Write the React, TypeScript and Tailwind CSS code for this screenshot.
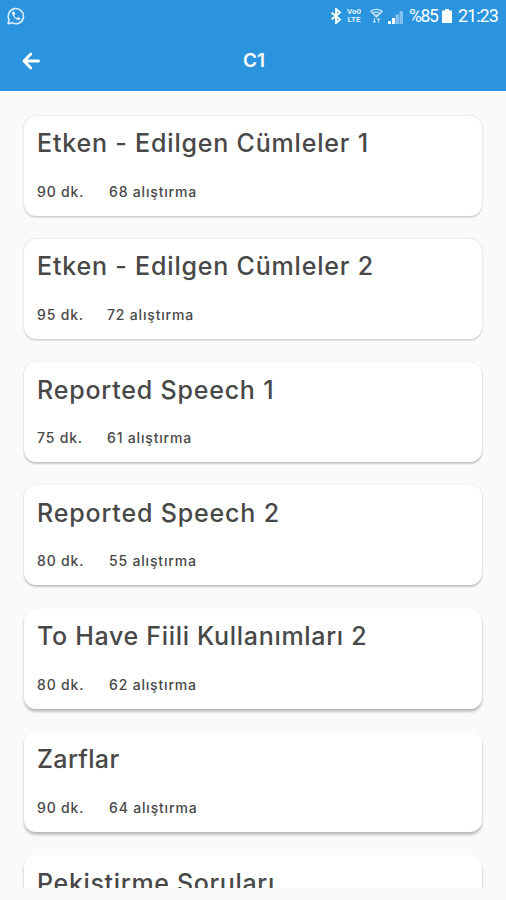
// App.tsx
// Lesson list for a single level (C1).

// ─── Types ────────────────────────────────────────────────────────────────────

interface Lesson {
  title: string;
  minutes: number;
  exercises: number;
  titleClass: string;
  minutesClass: string;
  shadow: string;
}

const SHADOW = {
  soft: "shadow-[0_0_2px_rgba(0,0,0,0.2),0_2px_1px_rgba(0,0,0,0.1)]",
  medium: "shadow-[0_0_2px_rgba(0,0,0,0.12),0_2px_2px_rgba(0,0,0,0.2)]",
  deep: "shadow-[0_1px_2px_rgba(0,0,0,0.08),0_3px_3px_rgba(0,0,0,0.22)]",
};

const LESSONS: Lesson[] = [
  { title: "Etken - Edilgen Cümleler 1", minutes: 90, exercises: 68, titleClass: "tracking-[0.81px]", minutesClass: "w-[72px]", shadow: SHADOW.soft },
  { title: "Etken - Edilgen Cümleler 2", minutes: 95, exercises: 72, titleClass: "tracking-[0.81px]", minutesClass: "w-[70px]", shadow: SHADOW.soft },
  { title: "Reported Speech 1", minutes: 75, exercises: 61, titleClass: "tracking-[0.8px]", minutesClass: "w-[70px]", shadow: SHADOW.medium },
  { title: "Reported Speech 2", minutes: 80, exercises: 55, titleClass: "tracking-[0.83px]", minutesClass: "w-[72px]", shadow: SHADOW.medium },
  { title: "To Have Fiili Kullanımları 2", minutes: 80, exercises: 62, titleClass: "tracking-[0.69px]", minutesClass: "w-[72px]", shadow: SHADOW.deep },
  { title: "Zarflar", minutes: 90, exercises: 64, titleClass: "tracking-[0.35px]", minutesClass: "w-[72px]", shadow: SHADOW.deep },
  { title: "Pekiştirme Soruları", minutes: 85, exercises: 60, titleClass: "tracking-[0.66px]", minutesClass: "w-[72px]", shadow: SHADOW.deep },
];

// ─── Status bar ───────────────────────────────────────────────────────────────

function WhatsAppIcon() {
  return (
    <svg className="size-[18px]" viewBox="0 0 18 18" fill="none" stroke="#d9ecfa" strokeWidth="1.6">
      <path d="M1.1 16.6 2.1 12.6A7.6 7.6 0 1 1 5.2 15.8Z" strokeLinejoin="round" />
      <path d="M6 4.6c-1.2.8-1.2 2.2 0 4.2 1.3 2.3 3.2 3.8 5 4.1 1.2.1 2.2-.5 2.4-1.7l-2.3-1.3-1.2 1.3c-1.2-.5-2.3-1.6-2.8-2.8L8.3 7 7.2 4.6Z" fill="#e6f3fc" stroke="none" />
    </svg>
  );
}

function StatusBar() {
  return (
    <div className="flex h-8 items-center pl-[7px] pr-2 text-white">
      <WhatsAppIcon />
      <svg className="ml-auto h-4 w-3" viewBox="0 0 12 16" fill="none" stroke="white" strokeWidth="1.9">
        <path d="M1.5 4.5 10 11.5 6 15V1l4 3.5-8.5 7" />
      </svg>
      <div className="ml-1 flex w-4 flex-col items-center font-['Roboto',sans-serif] text-[8px] font-bold leading-none text-[#e3f1fb]">
        <span>Vo0</span>
        <span>LTE</span>
      </div>
      <svg className="ml-2 h-4 w-[13px]" viewBox="0 0 13 16" fill="none" stroke="#c5e1f6" strokeWidth="1.4">
        <path d="M.8 3.2c3.3-2.4 8.1-2.4 11.4 0L6.5 9Z" />
        <path d="M3 5.3c2-1.3 5-1.3 7 0M4.6 7.2h3.8" />
        <path d="M4.4 10v4.5M2.8 13l1.6 1.8L6 13M8.6 14.8v-4.5M7 12l1.6-1.8 1.6 1.8" strokeWidth="1" />
      </svg>
      <svg className="ml-[5px] h-[15px] w-[15px]" viewBox="0 0 15 15">
        <path d="M0 12h3v3H0zM4 9h3v6H4z" fill="white" />
        <path d="M7.5 5.5h3.5V15H7.5zM11.5 2H15v13h-3.5z" fill="#83c0ed" />
      </svg>
      <span className="ml-[6px] w-[32px] whitespace-nowrap font-['Roboto',sans-serif] text-[17.5px] leading-8 tracking-[-1.3px]">%85</span>
      <svg className="ml-px h-[14px] w-[10px]" viewBox="0 0 10 14" fill="white">
        <path d="M3 0h4v1.5h3V14H0V1.5h3z" />
      </svg>
      <span className="ml-[6px] w-10 whitespace-nowrap font-['Roboto',sans-serif] text-[18px] leading-8 tracking-[-1px]">21:23</span>
    </div>
  );
}

// ─── Header ───────────────────────────────────────────────────────────────────

function Header() {
  return (
    <header className="h-[91px] shrink-0 bg-[#2a95de]">
      <StatusBar />
      <div className="grid h-[58px] grid-cols-[1fr_auto_1fr] items-center pl-[22px] pr-5 text-white">
        <svg className="h-[18px] w-[18px]" viewBox="0 0 18 18" fill="none" stroke="white" strokeWidth="2.8" strokeLinecap="round" strokeLinejoin="round">
          <path d="M8.8 2 2 9l6.8 7M3 9h13.5" />
        </svg>
        <h1 className="text-[19px] font-semibold leading-6">C1</h1>
      </div>
    </header>
  );
}

// ─── Lesson card ──────────────────────────────────────────────────────────────

function LessonCard({ lesson }: { lesson: Lesson }) {
  return (
    <div className={["h-[100px] shrink-0 rounded-xl bg-white px-[13px] pt-[11.5px]", lesson.shadow].join(" ")}>
      <h2 className={["whitespace-nowrap text-[25px] font-medium leading-8", lesson.titleClass].join(" ")}>{lesson.title}</h2>
      <div className="mt-[22.5px] flex whitespace-nowrap text-sm font-medium leading-5 tracking-[0.82px]">
        <span className={lesson.minutesClass}>{lesson.minutes} dk.</span>
        <span>{lesson.exercises} alıştırma</span>
      </div>
    </div>
  );
}

export default function App() {
  return (
    <div className="flex h-[900px] w-[506px] flex-col overflow-hidden bg-[#fafafa] pb-3 font-['Inter',sans-serif] text-[#484848]">
      <Header />
      <main className="flex min-h-0 flex-1 flex-col gap-[23.3px] overflow-hidden px-6 pt-[24.5px]">
        {LESSONS.map((lesson) => (
          <LessonCard key={lesson.title} lesson={lesson} />
        ))}
      </main>
    </div>
  );
}
